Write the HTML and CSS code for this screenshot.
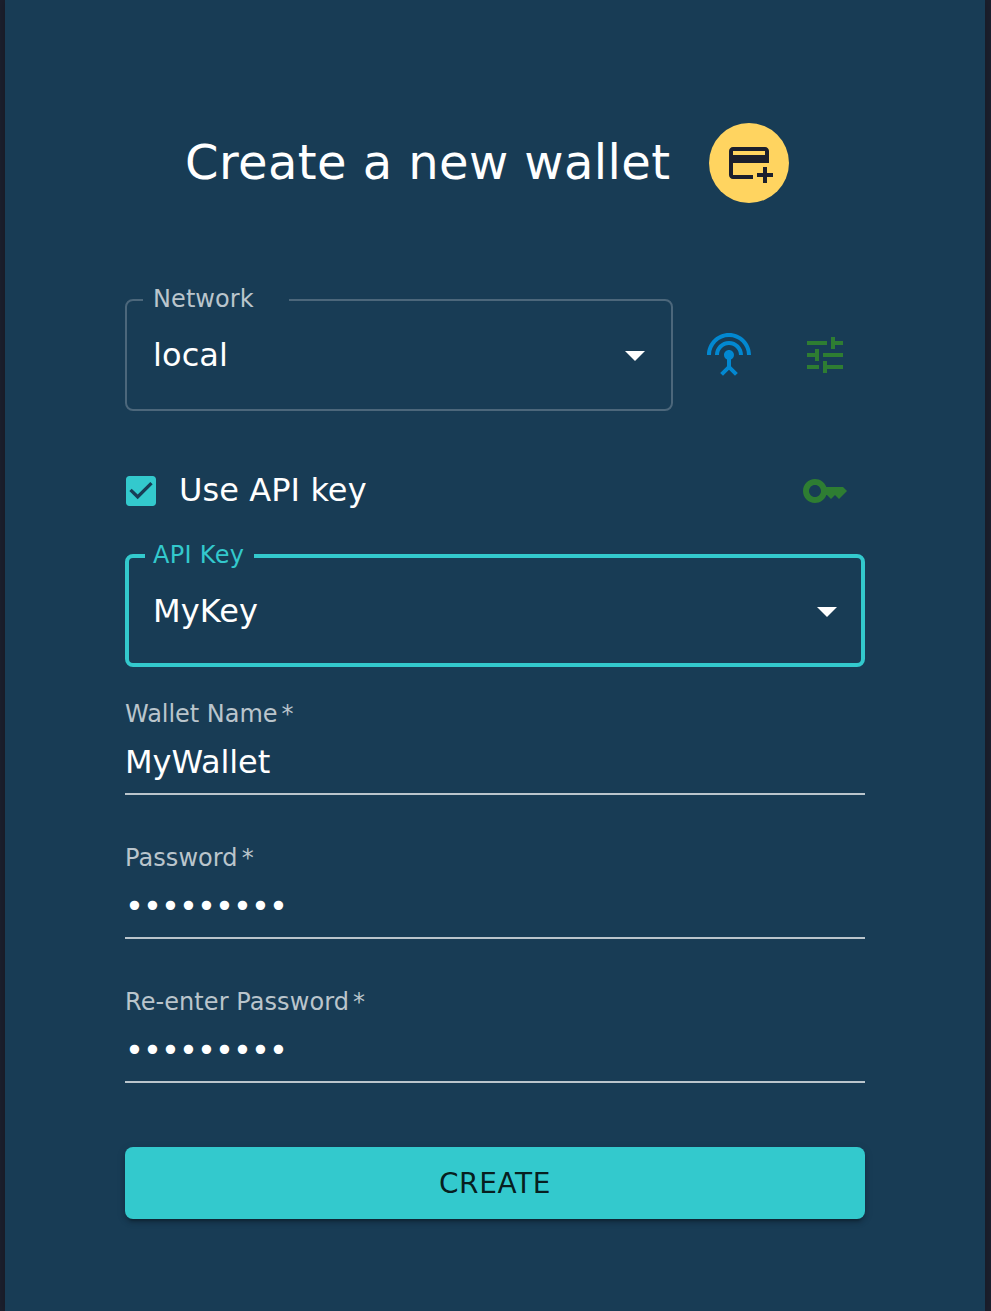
FILE: index.html
```html
<!DOCTYPE html>
<html lang="en">
<head>
<meta charset="utf-8">
<title>Create a new wallet</title>
<link rel="stylesheet" href="styles.css">
</head>
<body>
<main class="panel">
  <header class="header">
    <h1 class="title">Create a new wallet</h1>
    <span class="avatar">
      <svg class="icon" viewBox="0 0 24 24"><path d="M20 4H4c-1.11 0-1.99.89-1.99 2L2 18c0 1.11.89 2 2 2h10v-2H4v-6h18V6c0-1.11-.89-2-2-2zm0 4H4V6h16v2zm4 9v2h-3v3h-2v-3h-3v-2h3v-3h2v3h3z"/></svg>
    </span>
  </header>

  <div class="network-row">
    <fieldset class="select select-network">
      <legend class="select-label">Network</legend>
      <div class="select-value">
        <span>local</span>
        <svg class="icon" viewBox="0 0 24 24"><path d="M7 10l5 5 5-5z"/></svg>
      </div>
    </fieldset>
    <svg class="icon icon-info" viewBox="0 0 24 24"><path d="M12 5c-3.87 0-7 3.13-7 7h2c0-2.76 2.24-5 5-5s5 2.24 5 5h2c0-3.87-3.13-7-7-7zm1 9.29c.88-.39 1.5-1.26 1.5-2.29 0-1.38-1.12-2.5-2.5-2.5S9.5 10.62 9.5 12c0 1.02.62 1.9 1.5 2.29v3.3L7.59 21 9 22.41l3-3 3 3L16.41 21 13 17.59v-3.3zM12 1C5.93 1 1 5.93 1 12h2c0-4.97 4.03-9 9-9s9 4.03 9 9h2c0-6.07-4.93-11-11-11z"/></svg>
    <svg class="icon icon-success" viewBox="0 0 24 24"><path d="M3 17v2h6v-2H3zM3 5v2h10V5H3zm10 16v-2h8v-2h-8v-2h-2v6h2zM7 9v2H3v2h4v2h2V9H7zm14 4v-2H11v2h10zm-6-4h2V7h4V5h-4V3h-2v6z"/></svg>
  </div>

  <div class="api-row">
    <svg class="icon icon-check" viewBox="0 0 24 24"><path d="M19 3H5c-1.11 0-2 .9-2 2v14c0 1.1.89 2 2 2h14c1.11 0 2-.9 2-2V5c0-1.1-.89-2-2-2zm-9 14l-5-5 1.41-1.41L10 14.17l7.59-7.59L19 8l-9 9z"/></svg>
    <span class="check-label">Use API key</span>
    <svg class="icon icon-success" viewBox="0 0 24 24"><path d="M21 10h-8.35C11.83 7.67 9.61 6 7 6c-3.31 0-6 2.69-6 6s2.69 6 6 6c2.61 0 4.83-1.67 5.65-4H13l2 2 2-2 2 2 4-4.04L21 10zM7 15c-1.65 0-3-1.35-3-3s1.35-3 3-3 3 1.35 3 3-1.35 3-3 3z"/></svg>
  </div>

  <fieldset class="select select-focused">
    <legend class="select-label">API Key</legend>
    <div class="select-value">
      <span>MyKey</span>
      <svg class="icon" viewBox="0 0 24 24"><path d="M7 10l5 5 5-5z"/></svg>
    </div>
  </fieldset>

  <div class="fields">
    <label class="field">
      <span class="field-label field-label-tight">Wallet Name<span class="required">*</span></span>
      <input class="field-input" type="text" value="MyWallet">
    </label>
    <label class="field">
      <span class="field-label">Password<span class="required">*</span></span>
      <input class="field-input" type="password" value="wallet123">
    </label>
    <label class="field">
      <span class="field-label">Re-enter Password<span class="required">*</span></span>
      <input class="field-input" type="password" value="wallet123">
    </label>
  </div>

  <button class="submit" type="button">CREATE</button>
</main>
</body>
</html>
```
FILE: styles.css
```css
* {
  box-sizing: border-box;
}

body {
  margin: 0;
  padding: 0 6px 0 5px;
  background: #1b1f2d;
  color: #fff;
  font-family: "DejaVu Sans", sans-serif;
  font-size: 32px;
  letter-spacing: 0.08px;
}

.panel {
  display: flex;
  flex-direction: column;
  height: 1311px;
  padding: 123px 120px 0;
  background: #183c55;
  box-shadow: 0 0 8px rgba(0, 0, 0, 0.2);
}

.icon {
  flex: none;
  width: 48px;
  height: 48px;
  fill: currentColor;
}

.icon-info {
  color: #0288d1;
}

.icon-success {
  color: #2e7d32;
}

.header {
  display: flex;
  align-items: center;
  gap: 40px;
  height: 80px;
  padding-left: 60px;
}

.title {
  width: 484px;
  margin: 0 0 2px;
  font-size: 48px;
  font-weight: 400;
  line-height: 64px;
  letter-spacing: 0.42px;
  white-space: nowrap;
}

.avatar {
  display: flex;
  align-items: center;
  justify-content: center;
  width: 80px;
  height: 80px;
  border-radius: 50%;
  background: #ffd460;
  color: #1b1f2d;
}

.network-row {
  display: flex;
  align-items: flex-start;
  margin-top: 86px;
}

.network-row > .icon {
  margin: 42px 0 0 32px;
}

.network-row > .icon-success {
  margin-left: 48px;
}

.select {
  height: 122px;
  min-width: 0;
  margin: 0;
  padding: 0 12px 0 16px;
  border: 2px solid #4c677b;
  border-radius: 8px;
}

.select-network {
  width: 548px;
}

.select-label {
  width: 146px;
  height: 22px;
  padding: 0 0 0 10px;
  color: #bac5cc;
  font-size: 24px;
  line-height: 20px;
  letter-spacing: 0.08px;
}

.select-value {
  display: flex;
  align-items: center;
  justify-content: space-between;
  height: 48px;
  margin-top: 20px;
  padding-left: 10px;
}

.select-focused {
  padding-right: 10px;
  border: 4px solid #33c9cd;
}

.select-focused .select-label {
  width: 109px;
  padding-left: 8px;
  color: #33c9cd;
  letter-spacing: 0.3px;
}

.select-focused .select-value {
  padding-left: 8px;
}

.api-row {
  display: flex;
  align-items: center;
  height: 48px;
  margin: 56px 16px 30px -4px;
}

.icon-check {
  width: 40px;
  height: 40px;
  color: #33c9cd;
}

.check-label {
  flex: 1;
  margin: 0 0 2px 18px;
  line-height: 48px;
}

.fields {
  display: flex;
  flex-direction: column;
  gap: 32px;
  margin-top: 16px;
}

.field {
  display: flex;
  flex-direction: column;
  height: 112px;
  padding-top: 14px;
  border-bottom: 2px solid #bac5cc;
}

.field-label {
  color: #bac5cc;
  font-size: 24px;
  line-height: 34px;
  letter-spacing: 0.07px;
}

.field-label-tight {
  letter-spacing: -0.03px;
}

.required {
  margin-left: 4px;
}

.field-input {
  width: 100%;
  height: 46px;
  margin-top: 8px;
  padding: 0;
  border: 0;
  outline: 0;
  background: transparent;
  color: #fff;
  font: inherit;
  letter-spacing: -0.08px;
}

.field-input[type="password"] {
  letter-spacing: -0.88px;
}

.submit {
  height: 72px;
  margin-top: 64px;
  padding: 0;
  border: 0;
  border-radius: 8px;
  background: #33c9cd;
  box-shadow: 0 6px 2px -4px rgba(0, 0, 0, 0.2), 0 4px 4px rgba(0, 0, 0, 0.14), 0 2px 10px rgba(0, 0, 0, 0.12);
  color: rgba(0, 0, 0, 0.87);
  font-family: inherit;
  font-size: 28px;
  line-height: 49px;
  letter-spacing: 0.6px;
}
```
